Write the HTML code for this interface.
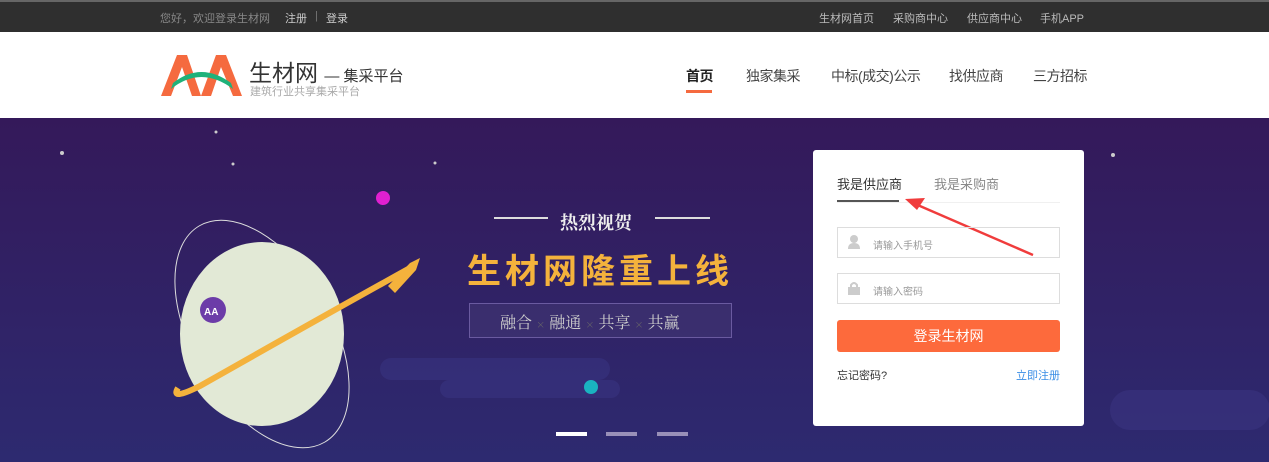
<!DOCTYPE html>
<html><head><meta charset="utf-8"><style>
*{margin:0;padding:0;box-sizing:border-box}
body{width:1269px;height:462px;overflow:hidden;font-family:"Liberation Sans","Noto Sans CJK SC",sans-serif;position:relative;background:#fff}
.top{position:absolute;left:0;top:0;width:1269px;height:32px;background:#2f2f2f;border-top:2px solid #666;font-size:11px;color:#bbb}
.top span{position:absolute;top:8px}
.hd{position:absolute;top:32px;left:0;width:1269px;height:86px;background:#fff}
.nav{position:absolute;top:34px;font-size:14px;color:#444;letter-spacing:-0.5px}
.ban{position:absolute;top:118px;left:0;width:1269px;height:344px;background:linear-gradient(#34195a,#2d2a70);overflow:hidden}
.card{position:absolute;left:813px;top:150px;width:271px;height:276px;background:#fff;border-radius:3px}
.inp{position:absolute;left:24px;width:223px;height:31px;border:1px solid #ddd;font-size:10px;color:#999}
</style></head><body>
<div class="top">
<span style="left:160px;color:#888">您好，欢迎登录生材网</span>
<span style="left:285px;color:#ccc">注册</span>
<span style="left:315px;color:#777">|</span>
<span style="left:326px;color:#ccc">登录</span>
<span style="left:819px">生材网首页</span>
<span style="left:893px">采购商中心</span>
<span style="left:967px">供应商中心</span>
<span style="left:1040px">手机APP</span>
</div>
<div class="hd">
<svg style="position:absolute;left:161px;top:21px" width="82" height="44" viewBox="0 0 82 44">
<path d="M0 43 L16 2 L26 2 L40 43 L31 43 L21 14 L10 43Z" fill="#f56a3f"/>
<path d="M40 43 L55 2 L65 2 L81 43 L72 43 L60 14 L50 43Z" fill="#f56a3f"/>
<path d="M10 36 Q40 12 72 36 L70 30 Q40 8 12 30Z" fill="#1fb27a"/>
</svg>
<div style="position:absolute;left:249px;top:22px;font-size:23px;color:#333">生材网 <span style="font-size:15px">— 集采平台</span></div>
<div style="position:absolute;left:250px;top:51px;font-size:11px;color:#aaa">建筑行业共享集采平台</div>
<div class="nav" style="left:686px;color:#222;font-weight:bold">首页</div>
<div style="position:absolute;left:686px;top:58px;width:26px;height:3px;background:#f56a3f"></div>
<div class="nav" style="left:746px">独家集采</div>
<div class="nav" style="left:831px">中标(成交)公示</div>
<div class="nav" style="left:949px">找供应商</div>
<div class="nav" style="left:1033px">三方招标</div>
</div>
<div class="ban">
<div style="position:absolute;left:380px;top:240px;width:230px;height:22px;background:#383480;border-radius:11px;opacity:.6"></div>
<div style="position:absolute;left:440px;top:262px;width:180px;height:18px;background:#383480;border-radius:9px;opacity:.6"></div>
<div style="position:absolute;left:1110px;top:272px;width:160px;height:40px;background:#3a3480;border-radius:20px;opacity:.6"></div>
<svg style="position:absolute;left:0;top:0" width="1269" height="344">
<g fill="#ccc"><circle cx="62" cy="35" r="2"/><circle cx="233" cy="46" r="1.5"/><circle cx="1113" cy="37" r="2"/><circle cx="435" cy="45" r="1.5"/><circle cx="216" cy="14" r="1.5"/></g>
<ellipse cx="262" cy="216" rx="70" ry="125" fill="none" stroke="#ddd" stroke-width="1" transform="rotate(-30 262 216)"/>
<ellipse cx="262" cy="216" rx="82" ry="92" fill="#e2e9d6"/>
<path d="M178 270 Q170 283 200 268 Q320 200 410 150" stroke="#f4b23c" stroke-width="6" fill="none"/>
<circle cx="213" cy="192" r="13" fill="#6c3ca8"/>
<text x="204" y="197" font-size="10" fill="#fff" font-weight="bold">AA</text>
<path d="M388 168 L410 145 L420 140 L416 152 L395 175Z" fill="#f4b23c"/>
<circle cx="383" cy="80" r="7" fill="#e020d0"/>
<circle cx="591" cy="269" r="7" fill="#1ab3c0"/>
<line x1="494" y1="100" x2="548" y2="100" stroke="#ddd" stroke-width="2"/>
<line x1="655" y1="100" x2="710" y2="100" stroke="#ddd" stroke-width="2"/>
<rect x="469.5" y="185.5" width="262" height="34" fill="rgba(255,255,255,0.05)" stroke="#6a5aa0"/>
<rect x="556" y="314" width="31" height="4" fill="#fff"/>
<rect x="606" y="314" width="31" height="4" fill="#9990b8"/>
<rect x="657" y="314" width="31" height="4" fill="#9990b8"/>
</svg>
<div style="position:absolute;left:560px;top:91px;font-size:18px;color:#eee;font-weight:bold;font-family:'Noto Serif CJK SC',serif">热烈视贺</div>
<div style="position:absolute;left:467px;top:126px;font-size:34px;color:#f4b23c;font-weight:bold;letter-spacing:4px">生材网隆重上线</div>
<div style="position:absolute;left:500px;top:192px;font-size:16px;color:#ccc;font-family:'Noto Serif CJK SC',serif">融合 <span style="font-size:9px;color:#776">×</span> 融通 <span style="font-size:9px;color:#776">×</span> 共享 <span style="font-size:9px;color:#776">×</span> 共赢</div>
</div>
<div class="card">
<div style="position:absolute;left:24px;top:24px;font-size:13px;color:#333">我是供应商</div>
<div style="position:absolute;left:121px;top:24px;font-size:13px;color:#888">我是采购商</div>
<div style="position:absolute;left:24px;top:52px;width:223px;height:1px;background:#f0f0f0"></div>
<div style="position:absolute;left:24px;top:50px;width:62px;height:2px;background:#555"></div>
<svg style="position:absolute;left:0;top:0" width="271" height="120"><path d="M220 105 L100 53" stroke="#f03c3c" stroke-width="2.5"/><path d="M92 49 L112 48 L104 60Z" fill="#f03c3c"/></svg>
<div class="inp" style="top:77px"><span style="position:absolute;left:10px;top:7px;width:12px;height:14px"><svg width="12" height="14"><circle cx="6" cy="4" r="4" fill="#ccc"/><path d="M0 14 Q0 8 6 8 Q12 8 12 14Z" fill="#ccc"/></svg></span><span style="position:absolute;left:35px;top:9px">请输入手机号</span></div>
<div class="inp" style="top:123px"><span style="position:absolute;left:10px;top:7px"><svg width="12" height="14"><path d="M3 6 V4 Q6 0 9 4 V6" stroke="#ccc" stroke-width="2" fill="none"/><rect x="0" y="6" width="12" height="8" fill="#ccc"/></svg></span><span style="position:absolute;left:35px;top:9px">请输入密码</span></div>
<div style="position:absolute;left:24px;top:170px;width:223px;height:32px;background:#fd6a3c;border-radius:3px;color:#fff;font-size:14px;text-align:center;line-height:32px">登录生材网</div>
<div style="position:absolute;left:24px;top:217px;font-size:11px;color:#333">忘记密码?</div>
<div style="position:absolute;left:203px;top:217px;font-size:11px;color:#3a8ee6">立即注册</div>
</div>
</body></html>
